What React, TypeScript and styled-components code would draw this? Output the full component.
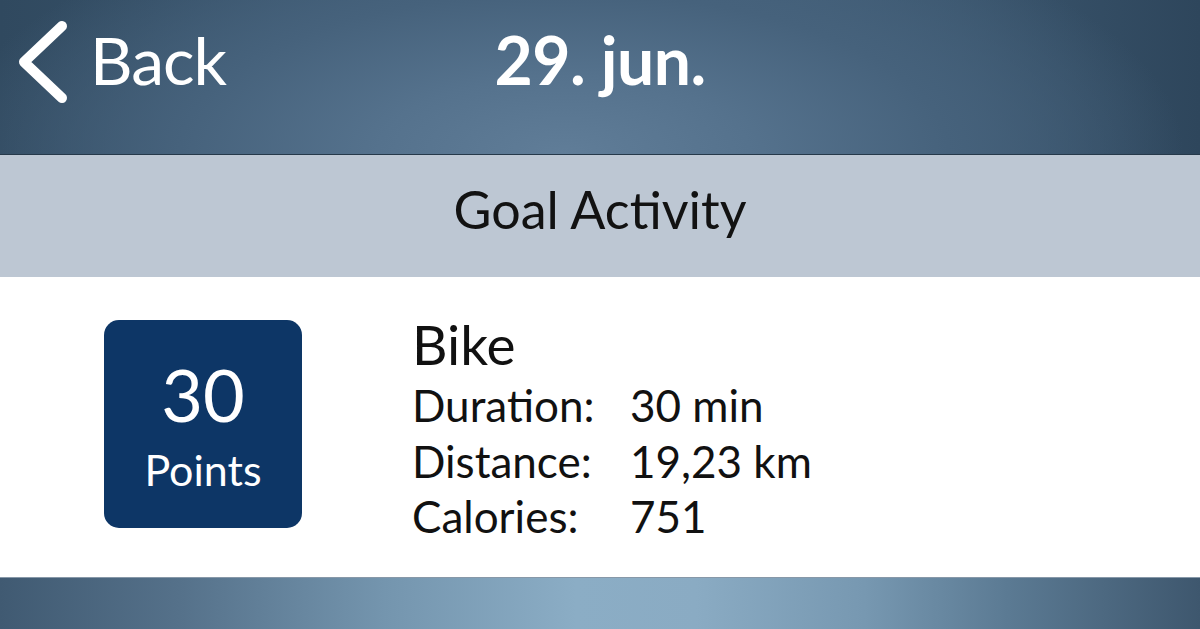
import React from "react";
import styled, { createGlobalStyle } from "styled-components";

const GlobalStyle = createGlobalStyle`
  html, body {
    margin: 0;
    padding: 0;
    height: 100%;
    overflow: hidden;
  }
  body {
    font-family: Lato, "Open Sans", "Noto Sans", sans-serif;
    background: #ffffff;
  }
  #root {
    height: 100%;
  }
`;

const Page = styled.div`
  display: flex;
  flex-direction: column;
  height: 100vh;
  width: 100%;
`;

const Header = styled.header`
  display: grid;
  grid-template-columns: 1fr auto 1fr;
  align-items: start;
  height: 154px;
  border-bottom: 1px solid #26394a;
  box-sizing: content-box;
  background:
    radial-gradient(ellipse 620px 260px at 47% 100%, #607d98 0%, #55728d 30%, #46627c 62%, rgba(46, 72, 96, 0) 100%),
    linear-gradient(90deg, #30495f 0%, #3d5972 35%, #43607a 55%, #3a556d 80%, #2e465c 100%);
  color: #ffffff;
`;

const BackButton = styled.button`
  display: flex;
  align-items: flex-start;
  gap: 20px;
  justify-self: start;
  padding: 18px 0 0 14px;
  margin: 0;
  border: none;
  background: none;
  color: inherit;
  cursor: pointer;
  font: inherit;
`;

const BackLabel = styled.span`
  font-family: Lato, "Open Sans", sans-serif;
  font-size: 66px;
  line-height: 66px;
  font-weight: 400;
  padding-top: 9px;
  letter-spacing: -1px;
`;

const Title = styled.h1`
  margin: 0;
  padding-top: 27px;
  font-family: Lato, "Open Sans", sans-serif;
  font-size: 66px;
  line-height: 66px;
  font-weight: 700;
  letter-spacing: -0.5px;
`;

const SectionBar = styled.div`
  height: 122px;
  box-sizing: border-box;
  padding-top: 28px;
  background: #bdc7d3;
  text-align: center;
`;

const SectionTitle = styled.h2`
  margin: 0;
  font-family: Lato, "Open Sans", sans-serif;
  font-size: 52px;
  line-height: 52px;
  font-weight: 400;
  color: #121212;
`;

const Content = styled.main`
  display: flex;
  align-items: flex-start;
  gap: 110px;
  height: 300px;
  box-sizing: border-box;
  padding: 39px 0 0 104px;
  background: #ffffff;
`;

const PointsBox = styled.div`
  display: flex;
  flex-direction: column;
  align-items: center;
  width: 198px;
  height: 208px;
  margin-top: 4px;
  box-sizing: border-box;
  padding-top: 38px;
  border-radius: 15px;
  background: #0d3666;
  color: #ffffff;
`;

const PointsValue = styled.span`
  font-size: 72px;
  line-height: 72px;
  font-weight: 400;
`;

const PointsLabel = styled.span`
  margin-top: 18px;
  font-size: 43px;
  line-height: 44px;
  font-weight: 400;
`;

const Details = styled.div`
  display: flex;
  flex-direction: column;
  color: #111111;
`;

const ActivityName = styled.div`
  font-size: 55px;
  line-height: 56px;
  margin-bottom: 6px;
`;

const StatsGrid = styled.div`
  display: grid;
  grid-template-columns: 218px auto;
  font-size: 44px;
  line-height: 55.5px;
`;

const StatLabel = styled.span``;
const StatValue = styled.span``;

const Footer = styled.footer`
  flex: 1;
  border-top: 1px solid #8798a8;
  background: linear-gradient(
    90deg,
    #405a72 0%,
    #55718a 15%,
    #7495ae 32%,
    #8badc5 48%,
    #8aabc3 58%,
    #7798b1 72%,
    #5b7a93 84%,
    #3e576e 100%
  );
`;

const ChevronLeft = () => (
  <svg width="56" height="90" viewBox="0 0 56 90" aria-hidden="true">
    <path
      d="M48 8 L10 44 L48 80"
      fill="none"
      stroke="#ffffff"
      strokeWidth="10"
      strokeLinecap="round"
      strokeLinejoin="round"
    />
  </svg>
);

const stats = [
  { label: "Duration:", value: "30 min" },
  { label: "Distance:", value: "19,23 km" },
  { label: "Calories:", value: "751" },
];

export default function App() {
  return (
    <>
      <GlobalStyle />
      <Page>
        <Header>
          <BackButton>
            <ChevronLeft />
            <BackLabel>Back</BackLabel>
          </BackButton>
          <Title>29. jun.</Title>
          <div />
        </Header>
        <SectionBar>
          <SectionTitle>Goal Activity</SectionTitle>
        </SectionBar>
        <Content>
          <PointsBox>
            <PointsValue>30</PointsValue>
            <PointsLabel>Points</PointsLabel>
          </PointsBox>
          <Details>
            <ActivityName>Bike</ActivityName>
            <StatsGrid>
              {stats.map((s) => (
                <React.Fragment key={s.label}>
                  <StatLabel>{s.label}</StatLabel>
                  <StatValue>{s.value}</StatValue>
                </React.Fragment>
              ))}
            </StatsGrid>
          </Details>
        </Content>
        <Footer />
      </Page>
    </>
  );
}
